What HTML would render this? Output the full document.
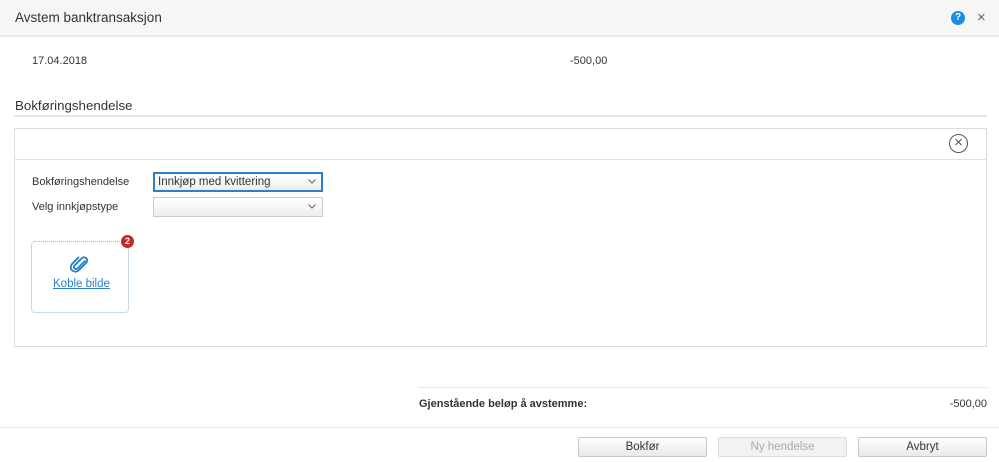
<!DOCTYPE html><html><head><style>
*{box-sizing:border-box;margin:0;padding:0}
body{width:999px;height:462px;background:#fff;font-family:"Liberation Sans",sans-serif;color:#333;position:relative;overflow:hidden;font-size:11px}
.a{position:absolute}
.btn{position:absolute;top:437px;width:129px;height:20px;border:1px solid #c8c8c8;border-radius:2px;background:linear-gradient(#fff,#e9e9e9);text-align:center;line-height:18px;font-size:11.5px;color:#333}
.sel{position:absolute;left:153px;width:170px;height:20px;border:1px solid #ccc;background:linear-gradient(#fff,#eee);font-size:11.5px;line-height:18px;padding-left:4px}
.chev{position:absolute;right:6px;top:6px}
</style></head><body>
<div class="a" style="left:0;top:0;width:999px;height:37px;background:#f6f6f6;border-bottom:2px solid #ececec"></div>
<div class="a" style="left:15px;top:10px;font-size:13.5px;color:#333">Avstem banktransaksjon</div>
<div class="a" style="left:951px;top:11px;width:14px;height:14px;border-radius:50%;background:#1a8fdd;color:#fff;font-size:10px;font-weight:bold;text-align:center;line-height:14px">?</div>
<div class="a" style="left:977px;top:9px;font-size:15px;color:#666">×</div>
<div class="a" style="left:32px;top:55px">17.04.2018</div>
<div class="a" style="left:570px;top:55px">-500,00</div>
<div class="a" style="left:15px;top:98px;font-size:13.3px">Bokføringshendelse</div>
<div class="a" style="left:14px;top:115px;width:973px;height:2px;background:#e6e6e6"></div>
<div class="a" style="left:14px;top:128px;width:973px;height:219px;border:1px solid #ddd"></div>
<div class="a" style="left:15px;top:159px;width:971px;height:1px;background:#e2e2e2"></div>
<div class="a" style="left:949px;top:134px;width:19px;height:19px;border:1.5px solid #555;border-radius:50%;text-align:center;line-height:16px;font-size:15px;color:#555">×</div>
<div class="a" style="left:32px;top:176px">Bokføringshendelse</div>
<div class="a" style="left:32px;top:201px">Velg innkjøpstype</div>
<div class="sel" style="top:172px;border:2px solid #2f7fc8;line-height:16px;padding-left:3px">Innkjøp med kvittering<svg class="chev" style="top:5px;right:5px" width="8" height="5" viewBox="0 0 8 5"><path d="M0.5 0.5 L4 4 L7.5 0.5" fill="none" stroke="#666" stroke-width="1"/></svg></div>
<div class="sel" style="top:197px"><svg class="chev" width="8" height="5" viewBox="0 0 8 5"><path d="M0.5 0.5 L4 4 L7.5 0.5" fill="none" stroke="#666" stroke-width="1"/></svg></div>
<div class="a" style="left:31px;top:241px;width:98px;height:72px;border:1.5px dotted #7fbdea;border-radius:4px"></div>
<svg class="a" style="left:69px;top:254px" width="22" height="22" viewBox="0 0 22 22"><path d="M16 7 L8.5 14.5 a2 2 0 0 1 -3 -3 L13 4 a3.2 3.2 0 0 1 4.5 4.5 L9.5 16.5 a4.6 4.6 0 0 1 -6.5 -6.5 L9.5 3.5" fill="none" stroke="#1a7fd0" stroke-width="1.8" stroke-linecap="round"/></svg>
<div class="a" style="left:53px;top:278px;color:#2a7fce;text-decoration:underline;font-size:11.5px">Koble bilde</div>
<div class="a" style="left:121px;top:235px;width:13px;height:13px;border-radius:50%;background:#c9252b;color:#fff;font-size:9px;font-weight:bold;text-align:center;line-height:13px">2</div>
<div class="a" style="left:418px;top:387px;width:569px;height:1px;background:#e5e5e5"></div>
<div class="a" style="left:419px;top:398px;font-weight:bold">Gjenstående beløp å avstemme:</div>
<div class="a" style="right:12px;top:398px">-500,00</div>
<div class="a" style="left:0;top:427px;width:999px;height:1px;background:#e5e5e5"></div>
<div class="btn" style="left:578px">Bokfør</div>
<div class="btn" style="left:718px;color:#aaa;background:#f2f2f2;border-color:#ddd">Ny hendelse</div>
<div class="btn" style="left:858px">Avbryt</div>
</body></html>
